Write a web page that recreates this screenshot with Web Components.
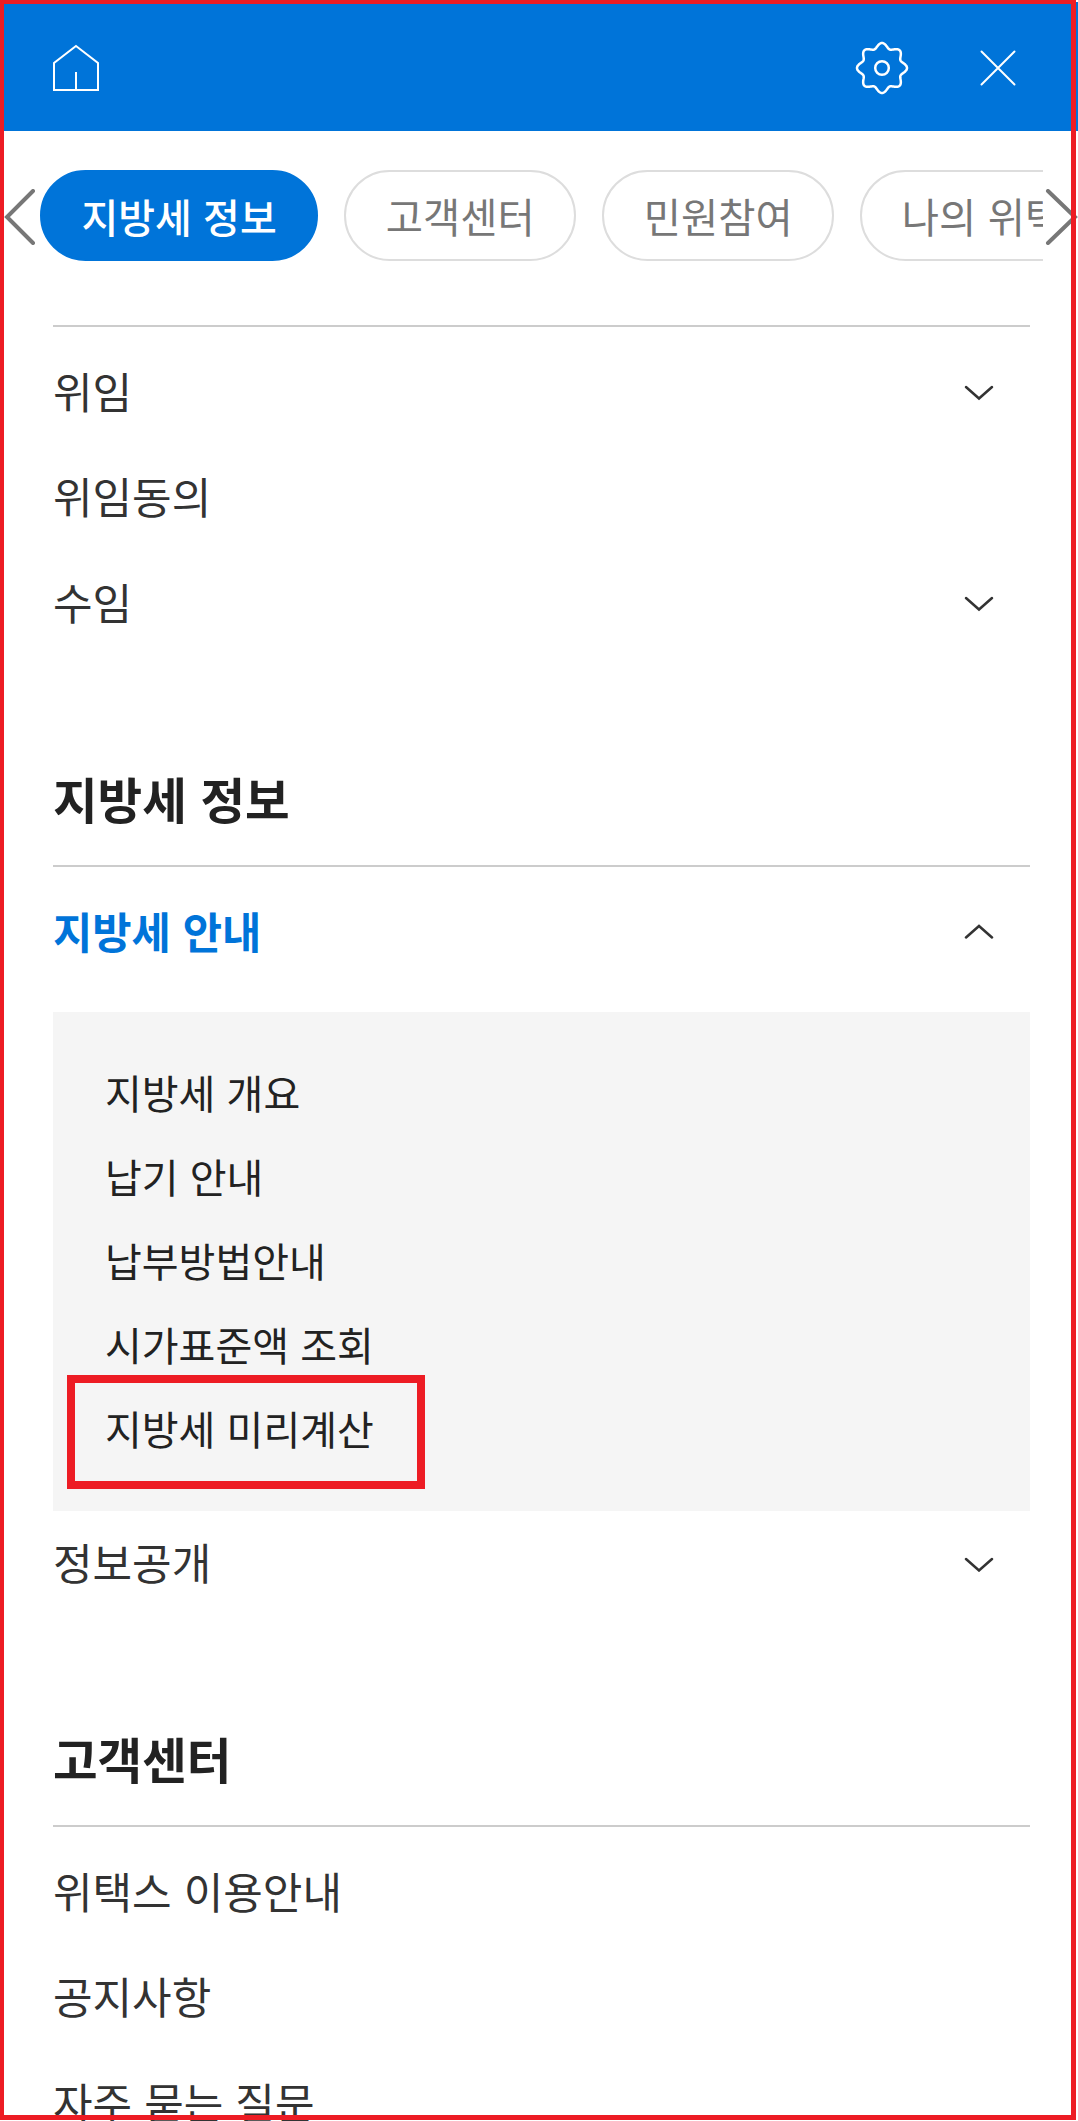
<!DOCTYPE html>
<html lang="ko">
<head>
<meta charset="utf-8">
<title>지방세 메뉴</title>
<style>
  html, body {
    margin: 0;
    background: #fff;
  }
  body {
    font-family: 'Noto Sans CJK KR', 'Noto Sans', sans-serif;
  }
</style>
</head>
<body>
<menu-frame>
  <menu-header></menu-header>
  <tab-strip>
    <tab-pill active>지방세 정보</tab-pill>
    <tab-pill>고객센터</tab-pill>
    <tab-pill>민원참여</tab-pill>
    <tab-pill>나의 위택스</tab-pill>
  </tab-strip>
  <menu-section>
    <menu-row arrow="down">위임</menu-row>
    <menu-row>위임동의</menu-row>
    <menu-row arrow="down">수임</menu-row>
  </menu-section>
  <menu-section heading="지방세 정보">
    <menu-row arrow="up" open>지방세 안내</menu-row>
    <sub-panel>
      <sub-item>지방세 개요</sub-item>
      <sub-item>납기 안내</sub-item>
      <sub-item>납부방법안내</sub-item>
      <sub-item>시가표준액 조회</sub-item>
      <sub-item marked>지방세 미리계산</sub-item>
    </sub-panel>
    <menu-row arrow="down" after-panel>정보공개</menu-row>
  </menu-section>
  <menu-section heading="고객센터">
    <menu-row>위택스 이용안내</menu-row>
    <menu-row>공지사항</menu-row>
    <menu-row>자주 묻는 질문</menu-row>
  </menu-section>
</menu-frame>

<script>
// Outer frame, the red outline is laid over the page content
customElements.define('menu-frame', class extends HTMLElement {
  constructor () {
    super()
    this.attachShadow({ mode: 'open' }).innerHTML = `
      <style>
        :host {
          display: block;
          position: relative;
          height: 2121px;
          overflow: hidden;
          background: #fff;
        }
        #outline {
          position: absolute;
          left: 0;
          top: 0;
          width: 1076px;
          height: 2120px;
          box-sizing: border-box;
          border: solid #ed1c24;
          border-width: 4px 5px 5px 4px;
          pointer-events: none;
        }
      </style>
      <slot></slot>
      <div id="outline"></div>`
  }
})

// Blue bar with home, settings and close icons
customElements.define('menu-header', class extends HTMLElement {
  constructor () {
    super()
    // gear outline: eight round lobes around the hub
    let teeth = ''
    for (let i = 0; i < 360; i += 2) {
      const a = i * Math.PI / 180
      const r = 20 + 5 * (1 + Math.cos(8 * a)) / 2
      teeth += `${i ? 'L' : 'M'}${(27 + r * Math.sin(a)).toFixed(2)} ${(27 - r * Math.cos(a)).toFixed(2)} `
    }
    this.attachShadow({ mode: 'open' }).innerHTML = `
      <style>
        :host {
          display: flex;
          align-items: center;
          box-sizing: border-box;
          height: 129px;
          margin-top: 2px;
          padding: 2px 62px 0 52px;
          background: #0074d9;
        }
        svg {
          display: block;
          fill: none;
          stroke: #fff;
          stroke-width: 2;
        }
        #home { margin-right: auto; }
        #gear { margin-right: 71px; stroke-width: 2.500; }
      </style>
      <svg id="home" width="48" height="48" viewBox="0 0 48 48">
        <path d="M24 2 L46 19 V46 H2 V19 Z M24 28 V46"/>
      </svg>
      <svg id="gear" width="54" height="54" viewBox="0 0 54 54">
        <circle cx="27" cy="27" r="6.800"/>
        <path stroke-linejoin="round" d="${teeth}Z"/>
      </svg>
      <svg id="close" width="36" height="36" viewBox="0 0 36 36">
        <path stroke-linecap="round" d="M1.500 1.500 L34.500 34.500 M34.500 1.500 L1.500 34.500"/>
      </svg>`
  }
})

// Horizontal pill strip, clipped on the right, with arrows laid over it
customElements.define('tab-strip', class extends HTMLElement {
  constructor () {
    super()
    this.attachShadow({ mode: 'open' }).innerHTML = `
      <style>
        :host {
          display: block;
          position: relative;
          padding: 39px 0 64px 40px;
        }
        #track {
          display: flex;
          gap: 26px;
          width: 1003px;
          overflow: hidden;
        }
        svg {
          position: absolute;
          top: 58px;
          fill: none;
          stroke: #777;
          stroke-width: 4;
          stroke-linecap: round;
        }
        #prev { left: 4px; }
        #next { left: 1045px; }
      </style>
      <svg id="prev" width="32" height="56" viewBox="0 0 32 56"><path d="M29 2 L3 28 L29 54"/></svg>
      <div id="track"><slot></slot></div>
      <svg id="next" width="34" height="56" viewBox="0 0 34 56"><path d="M3 2 L30 28 L3 54"/></svg>`
  }
})

customElements.define('tab-pill', class extends HTMLElement {
  constructor () {
    super()
    this.attachShadow({ mode: 'open' }).innerHTML = `
      <style>
        :host {
          display: flex;
          flex: none;
          align-items: center;
          box-sizing: border-box;
          height: 91px;
          padding: 0 39.500px;
          border: 2px solid #ddd;
          border-radius: 46px;
          font-size: 40.500px;
          color: #777;
          white-space: nowrap;
        }
        :host([active]) {
          background: #0074d9;
          border-color: #0074d9;
          color: #fff;
          font-size: 40px;
          font-weight: 500;
        }
      </style>
      <slot></slot>`
  }
})

// A group of rows under a rule, with an optional bold heading above it
customElements.define('menu-section', class extends HTMLElement {
  constructor () {
    super()
    const heading = this.getAttribute('heading')
    this.attachShadow({ mode: 'open' }).innerHTML = `
      <style>
        :host {
          display: block;
          margin: 0 48px 0 53px;
        }
        h2 {
          margin: 98px 0 0;
          padding-bottom: 21px;
          line-height: 92px;
          font-size: 48.500px;
          font-weight: 700;
          color: #222;
        }
        #list {
          border-top: 2px solid #ccc;
          padding-top: 10px;
        }
      </style>
      ${heading ? `<h2>${heading}</h2>` : ''}
      <div id="list"><slot></slot></div>`
  }
})

customElements.define('menu-row', class extends HTMLElement {
  constructor () {
    super()
    const arrow = this.getAttribute('arrow')
    const path = arrow === 'up' ? 'M2 13.500 L15 2 L28 13.500' : 'M2 2 L15 13.500 L28 2'
    this.attachShadow({ mode: 'open' }).innerHTML = `
      <style>
        :host {
          display: flex;
          align-items: center;
          justify-content: space-between;
          height: 105.500px;
          padding-right: 36px;
          font-size: 43px;
          color: #333;
        }
        :host([open]) {
          padding-top: 1px;
          margin-bottom: 28.500px;
          color: #0074d9;
          font-weight: 700;
          font-size: 42.700px;
        }
        :host([after-panel]) {
          margin: -2px 0 2px;
        }
        svg {
          margin-top: 6px;
          fill: none;
          stroke: #333;
          stroke-width: 2.500;
          stroke-linecap: round;
        }
        :host([open]) svg { margin-top: 2px; }
      </style>
      <span><slot></slot></span>
      ${arrow ? `<svg width="30" height="15.500" viewBox="0 0 30 15.500"><path d="${path}"/></svg>` : ''}`
  }
})

customElements.define('sub-panel', class extends HTMLElement {
  constructor () {
    super()
    this.attachShadow({ mode: 'open' }).innerHTML = `
      <style>
        :host {
          display: block;
          padding: 38px 0 41px 52px;
          background: #f5f5f5;
        }
      </style>
      <slot></slot>`
  }
})

customElements.define('sub-item', class extends HTMLElement {
  constructor () {
    super()
    this.attachShadow({ mode: 'open' }).innerHTML = `
      <style>
        :host {
          display: block;
          position: relative;
          height: 84px;
          line-height: 84px;
          font-size: 40px;
          color: #222;
        }
        #mark {
          display: none;
          position: absolute;
          left: -38px;
          top: -11px;
          width: 358px;
          height: 114px;
          box-sizing: border-box;
          border: 8px solid #ed1c24;
        }
        :host([marked]) #mark { display: block; }
      </style>
      <slot></slot>
      <div id="mark"></div>`
  }
})
</script>
</body>
</html>
